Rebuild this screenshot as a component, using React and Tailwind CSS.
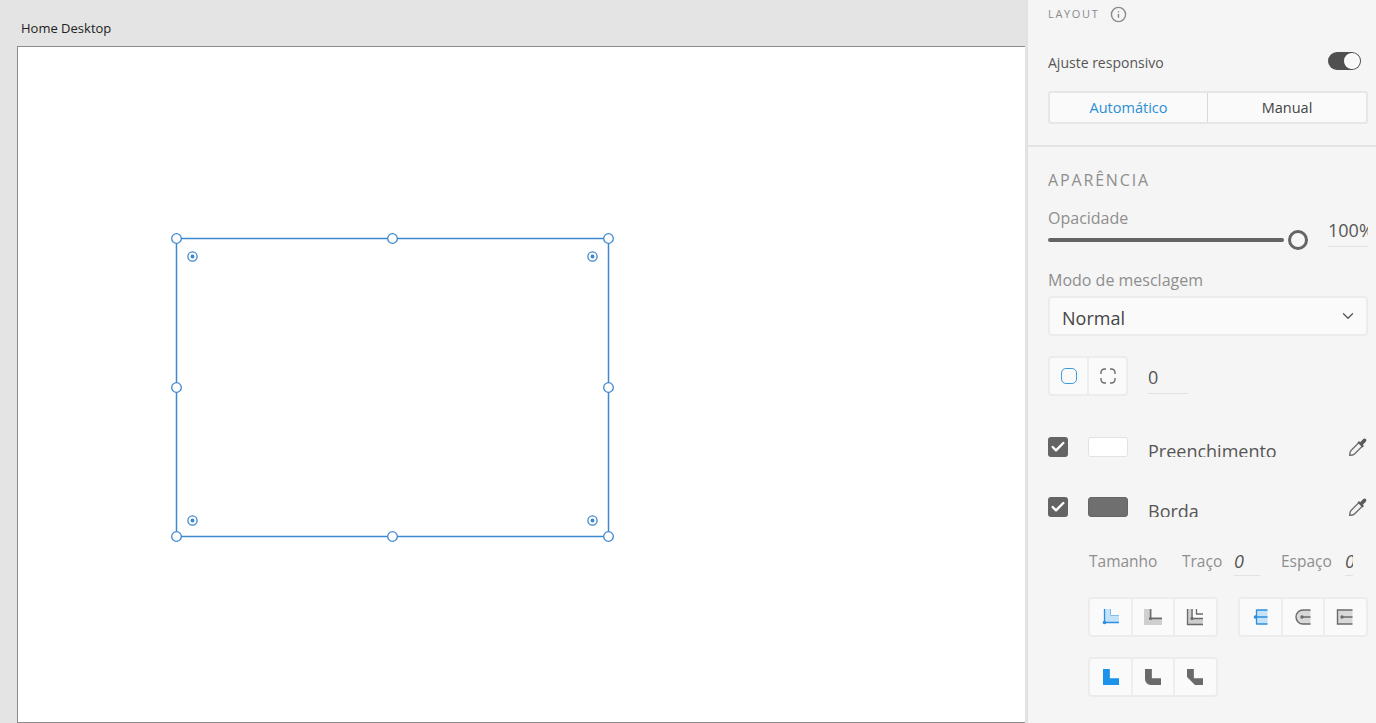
import { Check, ChevronDown, Info } from 'lucide-react'

const BLUE = '#3f88cf'

function SelectionBox() {
  const handles = [
    [176.5, 238.5], [392.5, 238.5], [608.5, 238.5],
    [176.5, 387.5], [608.5, 387.5],
    [176.5, 536.5], [392.5, 536.5], [608.5, 536.5],
  ]
  const radii = [[192.5, 256.5], [592.5, 256.5], [192.5, 520.5], [592.5, 520.5]]
  return (
    <svg className="absolute left-[-18px] top-[-47px]" width="700" height="600" fill="none">
      <rect x="176.500" y="238.500" width="432" height="298" stroke={BLUE} strokeWidth="1.500" />
      {handles.map(([x, y]) => (
        <circle key={`${x}-${y}`} cx={x} cy={y} r="4.800" fill="#fff" stroke={BLUE} strokeWidth="1.300" />
      ))}
      {radii.map(([x, y]) => (
        <g key={`${x}-${y}`}>
          <circle cx={x} cy={y} r="4.600" fill="#fff" stroke={BLUE} strokeWidth="1.300" />
          <circle cx={x} cy={y} r="1.900" fill={BLUE} />
        </g>
      ))}
    </svg>
  )
}

function Eyedropper() {
  return (
    <svg width="20" height="20" viewBox="0 0 20 20" fill="none">
      <path d="M10.500 6 3 13.500c-.9.9-1.300 2.500-1.300 4.800 2.300 0 3.900-.4 4.800-1.300L14 9.500" stroke="#707070" strokeWidth="1.400" fill="#f5f5f5" />
      <path d="M9.500 5.500 14.500 10.500 16 9 14.800 7.800 17.500 5.100c1.100-1.100 1.100-2.300.3-3-.8-.7-1.900-.7-3 .4L12.200 5.200 11 4z" fill="#5a5a5a" />
    </svg>
  )
}

function Swatch({ color, border }) {
  return <div className={`w-10 h-5 rounded-[3px] border ${color} ${border}`} />
}

function PaintRow({ label, swatch, className }) {
  return (
    <div className={`flex items-start ${className}`}>
      <div className="w-5 h-5 rounded-[3px] bg-[#646464] flex items-center justify-center">
        <Check size={16} strokeWidth={3.6} color="#fff" />
      </div>
      <div className="ml-5">{swatch}</div>
      <div className="ml-5 h-[20px] overflow-hidden text-[18px] leading-[29px] text-[#555] flex-1">{label}</div>
      <Eyedropper />
    </div>
  )
}

function IconCell({ children, wide, last }) {
  return (
    <div className={`${wide ? 'w-[44px]' : 'w-[42px]'} h-full flex items-center justify-center ${last ? '' : 'border-r-2 border-[#eeeeee]'}`}>
      {children}
    </div>
  )
}

function IconGroup({ children, className }) {
  return (
    <div className={`flex h-10 rounded-[4px] border-2 border-[#ececec] bg-[#fafafa] ${className}`}>
      {children}
    </div>
  )
}

function CornerIcon({ kind }) {
  const g = '#6a6a6a'
  const b = '#2b8fe0'
  if (kind === 'inside') {
    return (
      <svg width="18" height="18" viewBox="0 0 18 18" fill="none">
        <path d="M3 1h5.500v6.500H17V14H3z" fill="#c4e2f8" />
        <path d="M2.500 1v13.500H17" stroke={b} strokeWidth="1.300" />
        <path d="M8.500 1v6.500H17" stroke="#7dbcec" strokeWidth="1" />
        <circle cx="2.500" cy="14.500" r="1.800" fill={b} />
      </svg>
    )
  }
  if (kind === 'center') {
    return (
      <svg width="18" height="18" viewBox="0 0 18 18" fill="none">
        <path d="M0 1h8v8h10v8H0z" fill="#cfcfcf" />
        <path d="M6.500 1v9.500H18" stroke={g} strokeWidth="1.400" />
        <circle cx="6.500" cy="10.500" r="1.600" fill={g} />
      </svg>
    )
  }
  if (kind === 'outside') {
    return (
      <svg width="18" height="18" viewBox="0 0 18 18" fill="none">
        <path d="M1 1h6v9h10v7H1z" fill="#cdcdcd" />
        <path d="M1.500 1v15.500H17M6 1v9.500h11M10.500 1v5H17" stroke={g} strokeWidth="1.300" />
        <circle cx="6" cy="10.500" r="1.600" fill={g} />
      </svg>
    )
  }
  if (kind === 'capButt') {
    return (
      <svg width="18" height="18" viewBox="0 0 18 18" fill="none">
        <path d="M4.500 2h11v14h-11z" fill="#c4e2f8" />
        <path d="M4.500 1.500v15M4.500 2H15.500M4.500 9H15.500M4.500 16H15.500" stroke={b} strokeWidth="1.300" />
        <circle cx="3.500" cy="9" r="1.800" fill={b} />
      </svg>
    )
  }
  if (kind === 'capRound') {
    return (
      <svg width="18" height="18" viewBox="0 0 18 18" fill="none">
        <path d="M16.500 2H9a7 7 0 0 0 0 14h7.500z" fill="#d8d8d8" />
        <path d="M16.500 2H9a7 7 0 0 0 0 14h7.500M8 9h8.500" stroke={g} strokeWidth="1.400" />
        <circle cx="8" cy="9" r="1.700" fill={g} />
      </svg>
    )
  }
  if (kind === 'capSquare') {
    return (
      <svg width="18" height="18" viewBox="0 0 18 18" fill="none">
        <path d="M1.500 2h15v14h-15z" fill="#d8d8d8" />
        <path d="M16.500 2H1.500v14h15M6 9h10.500" stroke={g} strokeWidth="1.400" />
        <circle cx="6" cy="9" r="1.700" fill={g} />
      </svg>
    )
  }
  if (kind === 'joinMiter') {
    return (
      <svg width="16" height="16" viewBox="1 1 14 14">
        <path d="M1 1h6v8h8v6H1z" fill="#1c93ea" />
      </svg>
    )
  }
  if (kind === 'joinRound') {
    return (
      <svg width="16" height="16" viewBox="1 1 14 14">
        <path d="M1 1h6v8h8v6H6a5 5 0 0 1-5-5z" fill={g} />
      </svg>
    )
  }
  return (
    <svg width="16" height="16" viewBox="1 1 14 14">
      <path d="M1 1h6v8h8v6H8L1 8z" fill={g} />
    </svg>
  )
}

function App() {
  return (
    <div className="flex h-[723px] w-[1376px] overflow-hidden bg-[#f5f5f5] text-[#444] [font-family:'Open_Sans','Noto_Sans',sans-serif]">
      <div className="w-[1025px] shrink-0 flex flex-col bg-[#e4e4e4] pl-[17px]">
        <div className="h-[46px] shrink-0 pl-[4px] pt-[19px] text-[13px] leading-[18px] text-[#222]">Home Desktop</div>
        <div className="relative flex-1 bg-white border-l border-t border-b border-[#8c8c8c]">
          <SelectionBox />
        </div>
      </div>
      <div className="w-[3px] shrink-0 bg-[#e2e2e2]" />

      <div className="w-[348px] shrink-0 overflow-hidden">
        <div className="pl-5 w-[340px] h-[145px]">
          <div className="flex items-center h-7">
            <span className="text-[11px] tracking-[1.650px] text-[#8a8a8a]">LAYOUT</span>
            <Info size={17} strokeWidth={2} color="#8a8a8a" className="ml-[11px]" />
          </div>
          <div className="flex items-center justify-between mt-[20px] h-7">
            <span className="text-[14px] text-[#555]">Ajuste responsivo</span>
            <div className="relative w-[33px] h-[18px] rounded-full bg-[#505050] mr-[7px] mb-[2px]">
              <div className="absolute right-[1px] top-[1px] w-4 h-4 rounded-full bg-[#f8f8f8] border-2 border-white" />
            </div>
          </div>
          <div className="flex h-[33px] mt-[15px] rounded-[3px] border-2 border-[#e6e6e6] bg-[#fafafa] text-[14.500px]">
            <div className="w-[158px] flex items-center justify-center text-[#2b8fd6] border-r border-[#d8d8d8]">Automático</div>
            <div className="flex-1 flex items-center justify-center text-[#444]">Manual</div>
          </div>
        </div>

        <div className="h-[2px] bg-[#e4e4e4]" />

        <div className="pl-5 w-[340px]">
          <div className="mt-[21px] h-6 flex items-center text-[16px] tracking-[1.850px] text-[#8e8e8e]">APARÊNCIA</div>

          <div className="flex mt-[16px] h-[36px]">
            <div className="w-[260px] relative">
              <div className="text-[16px] leading-5 text-[#8e8e8e]">Opacidade</div>
              <div className="h-1 mt-[10px] w-[236px] bg-[#646464] rounded-sm" />
              <div className="absolute left-[240px] top-[22px] w-5 h-5 rounded-full border-[3px] border-[#666] bg-[#f8f8f8]" />
            </div>
            <div className="w-10 ml-5 h-[40px] overflow-hidden border-b border-[#e2e2e2] -mt-[1px] shrink-0">
              <div className="text-[18px] leading-[46px] whitespace-nowrap text-[#555]">100%</div>
            </div>
          </div>

          <div className="mt-[26px] text-[16px] leading-5 text-[#8e8e8e]">Modo de mesclagem</div>
          <div className="flex items-center justify-between mt-[6px] h-10 rounded-[4px] border-2 border-[#ececec] bg-[#fafafa] pl-[12px] pr-[9px] text-[18px] text-[#444]">
            <span className="pt-[5px]">Normal</span>
            <ChevronDown size={18} strokeWidth={1.7} color="#555" />
          </div>

          <div className="flex items-start mt-[20px] h-10">
            <div className="flex w-20 h-10 rounded-[4px] border-2 border-[#ececec] bg-[#fafafa]">
              <div className="w-[39px] flex items-center justify-center border-r-2 border-[#eeeeee]">
                <div className="w-4 h-4 rounded-[5px] border-[1.500px] border-[#3d9be0]" />
              </div>
              <div className="flex-1 flex items-center justify-center">
                <svg width="16" height="16" viewBox="0 0 16 16" fill="none" stroke="#6e6e6e" strokeWidth="1.400">
                  <path d="M1 6V4.500A3.500 3.500 0 0 1 4.500 1H6M10 1h1.500A3.500 3.500 0 0 1 15 4.500V6M15 10v1.500a3.500 3.500 0 0 1-3.500 3.500H10M6 15H4.500A3.500 3.500 0 0 1 1 11.500V10" />
                </svg>
              </div>
            </div>
            <div className="w-10 ml-5 h-[38px] border-b border-[#e2e2e2] text-[18px] leading-[42px] text-[#555]">0</div>
          </div>

          <PaintRow className="mt-[41px]" label="Preenchimento" swatch={<Swatch color="bg-white" border="border-[#e2e2e2]" />} />
          <PaintRow className="mt-[40px]" label="Borda" swatch={<Swatch color="bg-[#6f6f6f]" border="border-[#666]" />} />

          <div className="flex items-start mt-[31px] pl-[41px] h-[28px] text-[15.500px] leading-[26px] text-[#8e8e8e]">
            <span className="w-[93px]">Tamanho</span>
            <span className="w-[52px]">Traço</span>
            <span className="w-[26px] h-[28px] border-b border-[#e2e2e2] italic text-[18px] text-[#555]">0</span>
            <span className="ml-[21px] w-[64px]">Espaço</span>
            <span className="w-2 h-[28px] overflow-hidden border-b border-[#e2e2e2] italic text-[18px] text-[#555]">0</span>
          </div>

          <div className="flex mt-[21px] pl-10">
            <IconGroup className="w-[130px]">
              <IconCell wide><CornerIcon kind="inside" /></IconCell>
              <IconCell><CornerIcon kind="center" /></IconCell>
              <IconCell last><CornerIcon kind="outside" /></IconCell>
            </IconGroup>
            <IconGroup className="w-[130px] ml-5">
              <IconCell wide><CornerIcon kind="capButt" /></IconCell>
              <IconCell><CornerIcon kind="capRound" /></IconCell>
              <IconCell last><CornerIcon kind="capSquare" /></IconCell>
            </IconGroup>
          </div>
          <div className="flex mt-5 pl-10">
            <IconGroup className="w-[130px]">
              <IconCell wide><CornerIcon kind="joinMiter" /></IconCell>
              <IconCell><CornerIcon kind="joinRound" /></IconCell>
              <IconCell last><CornerIcon kind="joinBevel" /></IconCell>
            </IconGroup>
          </div>
        </div>
      </div>
    </div>
  )
}

export default App
